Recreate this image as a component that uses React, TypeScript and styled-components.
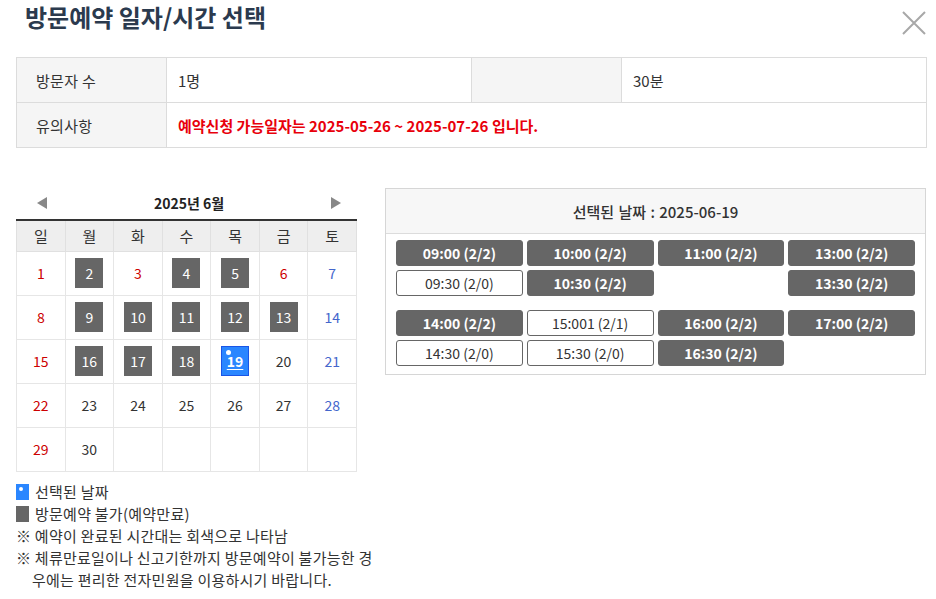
import React from "react";
import styled, { createGlobalStyle } from "styled-components";

const GlobalStyle = createGlobalStyle`
  html, body {
    margin: 0;
    padding: 0;
    background: #fff;
  }
  body {
    font-family: "Noto Sans CJK KR", "Noto Sans", sans-serif;
    font-size: 14px;
    color: #333;
  }
  * {
    box-sizing: border-box;
  }
`;

const Page = styled.div`
  width: 936px;
  height: 599px;
  padding: 0 10px 0 16px;
  overflow: hidden;
`;

const TitleBar = styled.div`
  display: flex;
  justify-content: space-between;
  align-items: flex-start;
  height: 57px;
`;

const Title = styled.h1`
  margin: 2px 0 0 9px;
  font-size: 24px;
  line-height: 30px;
  font-weight: 700;
  color: #2b3a4e;
`;

const CloseButton = styled.button`
  width: 24px;
  height: 24px;
  margin-top: 11px;
  padding: 0;
  border: none;
  background: none;
  cursor: pointer;
`;

const InfoTable = styled.table`
  width: 910px;
  border-collapse: collapse;
  table-layout: fixed;
  border-top: 1px solid #d6d6d6;
  border-bottom: 1px solid #d6d6d6;
  font-size: 15px;
`;

const Th = styled.th`
  height: 45px;
  padding: 0 0 0 19px;
  background: #f5f5f5;
  border: 1px solid #dcdcdc;
  border-left: none;
  text-align: left;
  font-weight: 400;
  color: #333;
  letter-spacing: 0.3px;
  &:first-child {
    border-left: 1px solid #dcdcdc;
  }
`;

const Td = styled.td<{ $warn?: boolean }>`
  height: 45px;
  padding: 0 0 0 11px;
  border: 1px solid #dcdcdc;
  color: ${(p) => (p.$warn ? "#e8000b" : "#333")};
  font-weight: ${(p) => (p.$warn ? 700 : 400)};
`;

const Body = styled.div`
  display: flex;
  align-items: flex-start;
  gap: 28px;
  margin-top: 40px;
`;

const LeftCol = styled.div`
  width: 341px;
  flex-shrink: 0;
`;

const CalNav = styled.div`
  display: flex;
  align-items: center;
  justify-content: space-between;
  height: 33px;
  padding: 0 16px 1px 21px;
  border-bottom: 2px solid #333;
`;

const Arrow = styled.button<{ $dir: "left" | "right" }>`
  width: 0;
  height: 0;
  padding: 0;
  border: none;
  background: none;
  border-top: 6px solid transparent;
  border-bottom: 6px solid transparent;
  ${(p) =>
    p.$dir === "left"
      ? "border-right: 10px solid #888;"
      : "border-left: 10px solid #888;"}
  cursor: pointer;
`;

const MonthLabel = styled.span`
  font-size: 14px;
  font-weight: 700;
  color: #222;
`;

const CalTable = styled.table`
  width: 341px;
  border-collapse: collapse;
  table-layout: fixed;
`;

const DayHead = styled.th`
  height: 30px;
  background: #eee;
  border: 1px solid #e0e0e0;
  border-top: none;
  font-size: 15px;
  font-weight: 400;
  color: #333;
`;

const DayCell = styled.td`
  height: 44px;
  border: 1px solid #e6e6e6;
  text-align: center;
  padding: 0;
`;

const dayColor = {
  sun: "#cc0000",
  sat: "#4466cc",
  normal: "#333",
};

const DayMark = styled.span<{ $kind: "plain" | "closed" | "selected"; $tone: keyof typeof dayColor }>`
  position: relative;
  display: inline-flex;
  align-items: center;
  justify-content: center;
  width: 28px;
  height: 30px;
  font-size: 14px;
  color: ${(p) => (p.$kind === "plain" ? dayColor[p.$tone] : "#fff")};
  background: ${(p) =>
    p.$kind === "closed" ? "#666" : p.$kind === "selected" ? "#2a86ff" : "transparent"};
  border: ${(p) => (p.$kind === "selected" ? "1px solid #1a55e6" : "none")};
  font-weight: ${(p) => (p.$kind === "selected" ? 700 : 400)};
  text-decoration: ${(p) => (p.$kind === "selected" ? "underline" : "none")};
  text-underline-offset: 2px;
`;

const Dot = styled.span`
  position: absolute;
  left: 4px;
  top: 3px;
  width: 5px;
  height: 5px;
  border-radius: 50%;
  background: #fff;
`;

const Legend = styled.ul`
  list-style: none;
  margin: 9px 0 0;
  padding: 0;
  font-size: 15px;
  line-height: 22px;
  letter-spacing: 0.25px;
  color: #333;
`;

const LegendItem = styled.li`
  display: flex;
  align-items: center;
  gap: 6px;
  white-space: nowrap;
`;

const Swatch = styled.span<{ $color: string }>`
  position: relative;
  display: inline-block;
  width: 13px;
  height: 16px;
  background: ${(p) => p.$color};
`;

const Note = styled.li`
  padding-left: 16px;
  text-indent: -16px;
  white-space: nowrap;
`;

const TimePanel = styled.div`
  flex: 1;
  border: 1px solid #d6d6d6;
`;

const TimeHeader = styled.div`
  height: 45px;
  display: flex;
  align-items: center;
  justify-content: center;
  background: #f7f7f7;
  border-bottom: 1px solid #dcdcdc;
  font-size: 15px;
  font-weight: 500;
  color: #333;
  word-spacing: 1px;
`;

const SlotArea = styled.div`
  display: flex;
  flex-direction: column;
  gap: 14px;
  padding: 6px 10px 8px;
`;

const SlotBlock = styled.div`
  display: grid;
  grid-template-columns: repeat(4, 1fr);
  column-gap: 4px;
`;

const SlotColumn = styled.div`
  display: flex;
  flex-direction: column;
  gap: 4px;
`;

const Slot = styled.button<{ $full: boolean }>`
  height: 26px;
  padding: 0;
  border-radius: 3px;
  border: 1px solid #666;
  background: ${(p) => (p.$full ? "#666" : "#fff")};
  color: ${(p) => (p.$full ? "#fff" : "#333")};
  font-family: inherit;
  font-size: 14px;
  font-weight: ${(p) => (p.$full ? 700 : 400)};
  cursor: pointer;
`;

type Tone = keyof typeof dayColor;
type Day = { n: number; kind: "plain" | "closed" | "selected"; tone: Tone } | null;

const closed = [2, 4, 5, 9, 10, 11, 12, 13, 16, 17, 18];
const redDays = [3, 6];

const weeks: Day[][] = (() => {
  const out: Day[][] = [];
  let week: Day[] = [];
  for (let n = 1; n <= 30; n++) {
    const dow = (n - 1) % 7;
    const tone: Tone = dow === 0 || redDays.includes(n) ? "sun" : dow === 6 ? "sat" : "normal";
    const kind = n === 19 ? "selected" : closed.includes(n) ? "closed" : "plain";
    week.push({ n, kind, tone });
    if (week.length === 7) {
      out.push(week);
      week = [];
    }
  }
  while (week.length < 7) week.push(null);
  out.push(week);
  return out;
})();

type SlotData = { label: string; full: boolean };

const slotBlocks: SlotData[][][] = [
  [
    [
      { label: "09:00 (2/2)", full: true },
      { label: "09:30 (2/0)", full: false },
    ],
    [
      { label: "10:00 (2/2)", full: true },
      { label: "10:30 (2/2)", full: true },
    ],
    [{ label: "11:00 (2/2)", full: true }],
    [
      { label: "13:00 (2/2)", full: true },
      { label: "13:30 (2/2)", full: true },
    ],
  ],
  [
    [
      { label: "14:00 (2/2)", full: true },
      { label: "14:30 (2/0)", full: false },
    ],
    [
      { label: "15:001 (2/1)", full: false },
      { label: "15:30 (2/0)", full: false },
    ],
    [
      { label: "16:00 (2/2)", full: true },
      { label: "16:30 (2/2)", full: true },
    ],
    [{ label: "17:00 (2/2)", full: true }],
  ],
];

const weekdays = ["일", "월", "화", "수", "목", "금", "토"];

const App: React.FC = () => {
  return (
    <>
      <GlobalStyle />
      <Page>
        <TitleBar>
          <Title>방문예약 일자/시간 선택</Title>
          <CloseButton aria-label="닫기">
            <svg width="24" height="24" viewBox="0 0 24 24">
              <path d="M1 1 L23 23 M23 1 L1 23" stroke="#a8a8a8" strokeWidth="2" fill="none" />
            </svg>
          </CloseButton>
        </TitleBar>

        <InfoTable>
          <colgroup>
            <col style={{ width: 150 }} />
            <col style={{ width: 305 }} />
            <col style={{ width: 150 }} />
            <col style={{ width: 305 }} />
          </colgroup>
          <tbody>
            <tr>
              <Th>방문자 수</Th>
              <Td>1명</Td>
              <Th />
              <Td>30분</Td>
            </tr>
            <tr>
              <Th>유의사항</Th>
              <Td colSpan={3} $warn>
                예약신청 가능일자는 2025-05-26 ~ 2025-07-26 입니다.
              </Td>
            </tr>
          </tbody>
        </InfoTable>

        <Body>
          <LeftCol>
            <CalNav>
              <Arrow $dir="left" aria-label="이전 달" />
              <MonthLabel>2025년 6월</MonthLabel>
              <Arrow $dir="right" aria-label="다음 달" />
            </CalNav>
            <CalTable>
              <thead>
                <tr>
                  {weekdays.map((w) => (
                    <DayHead key={w}>{w}</DayHead>
                  ))}
                </tr>
              </thead>
              <tbody>
                {weeks.map((week, i) => (
                  <tr key={i}>
                    {week.map((d, j) => (
                      <DayCell key={j}>
                        {d && (
                          <DayMark $kind={d.kind} $tone={d.tone}>
                            {d.kind === "selected" && <Dot />}
                            {d.n}
                          </DayMark>
                        )}
                      </DayCell>
                    ))}
                  </tr>
                ))}
              </tbody>
            </CalTable>

            <Legend>
              <LegendItem>
                <Swatch $color="#2a86ff">
                  <Dot style={{ left: 3, top: 3, width: 4, height: 4 }} />
                </Swatch>
                선택된 날짜
              </LegendItem>
              <LegendItem>
                <Swatch $color="#666" />
                방문예약 불가(예약만료)
              </LegendItem>
              <Note>※ 예약이 완료된 시간대는 회색으로 나타남</Note>
              <Note>
                ※ 체류만료일이나 신고기한까지 방문예약이 불가능한 경<br />
                우에는 편리한 전자민원을 이용하시기 바랍니다.
              </Note>
            </Legend>
          </LeftCol>

          <TimePanel>
            <TimeHeader>선택된 날짜 : 2025-06-19</TimeHeader>
            <SlotArea>
              {slotBlocks.map((block, bi) => (
                <SlotBlock key={bi}>
                  {block.map((col, ci) => (
                    <SlotColumn key={ci}>
                      {col.map((s) => (
                        <Slot key={s.label} $full={s.full}>
                          {s.label}
                        </Slot>
                      ))}
                    </SlotColumn>
                  ))}
                </SlotBlock>
              ))}
            </SlotArea>
          </TimePanel>
        </Body>
      </Page>
    </>
  );
};

export default App;
